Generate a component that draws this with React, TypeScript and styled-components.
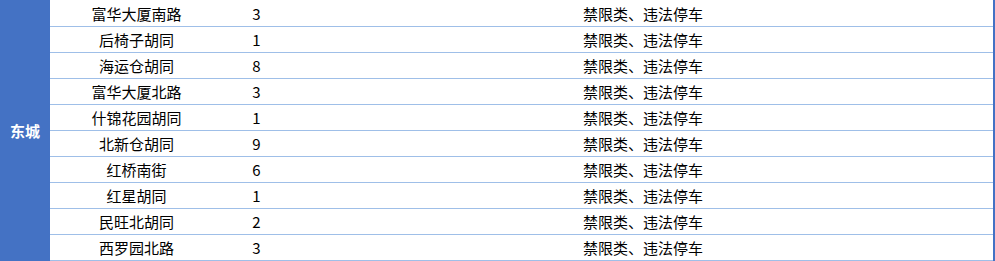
import styled, { createGlobalStyle } from 'styled-components';

const GlobalStyle = createGlobalStyle`
  html, body {
    margin: 0;
    padding: 0;
    background: #ffffff;
  }
  body {
    font-family: 'Noto Sans CJK SC', 'Noto Sans', sans-serif;
    color: #000000;
  }
`;

const rows = [
  { road: '富华大厦南路', count: 3, type: '禁限类、违法停车' },
  { road: '后椅子胡同', count: 1, type: '禁限类、违法停车' },
  { road: '海运仓胡同', count: 8, type: '禁限类、违法停车' },
  { road: '富华大厦北路', count: 3, type: '禁限类、违法停车' },
  { road: '什锦花园胡同', count: 1, type: '禁限类、违法停车' },
  { road: '北新仓胡同', count: 9, type: '禁限类、违法停车' },
  { road: '红桥南街', count: 6, type: '禁限类、违法停车' },
  { road: '红星胡同', count: 1, type: '禁限类、违法停车' },
  { road: '民旺北胡同', count: 2, type: '禁限类、违法停车' },
  { road: '西罗园北路', count: 3, type: '禁限类、违法停车' },
];

const Sheet = styled.div`
  display: flex;
  width: 995px;
  height: 261px;
  overflow: hidden;
`;

const District = styled.div`
  flex: 0 0 50px;
  display: flex;
  align-items: center;
  justify-content: center;
  background: #4472c4;
  color: #ffffff;
  font-size: 15px;
  font-weight: 700;
  height: 261px;
`;

const Body = styled.div`
  flex: 1;
  display: flex;
  flex-direction: column;
  padding-top: 1px;
  border-right: 2px solid #4472c4;
`;

const Row = styled.div`
  display: grid;
  grid-template-columns: 173px 67px 1fr;
  height: 25px;
  border-bottom: 1px solid #9fbfe8;
  font-size: 15px;
  line-height: 25px;
`;

const Cell = styled.div<{ $pad?: number }>`
  text-align: center;
  white-space: nowrap;
  padding-left: ${(p) => p.$pad ?? 0}px;
`;

export default function App() {
  return (
    <>
      <GlobalStyle />
      <Sheet>
        <District>东城</District>
        <Body>
          {rows.map((r, i) => (
            <Row key={i}>
              <Cell>{r.road}</Cell>
              <Cell>{r.count}</Cell>
              <Cell $pad={3}>{r.type}</Cell>
            </Row>
          ))}
        </Body>
      </Sheet>
    </>
  );
}
